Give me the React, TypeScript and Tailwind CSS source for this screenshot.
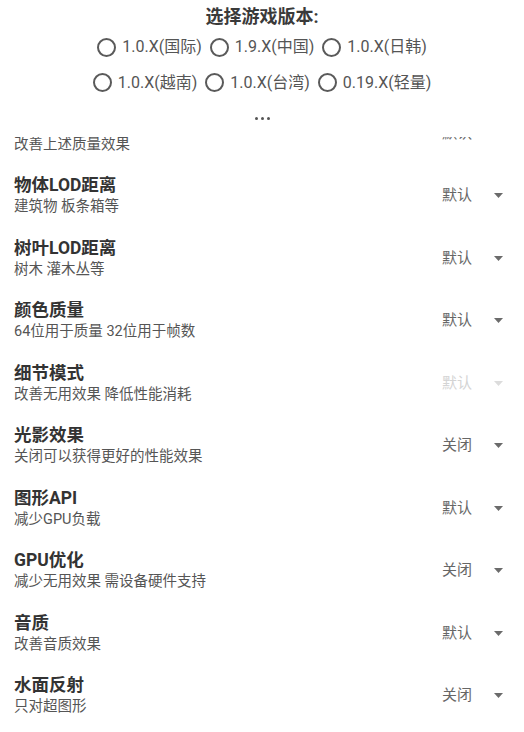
const versions = [
  ['1.0.X(国际)', '1.9.X(中国)', '1.0.X(日韩)'],
  ['1.0.X(越南)', '1.0.X(台湾)', '0.19.X(轻量)'],
];

type Setting = { title: string; desc: string; value: string; disabled?: boolean };

const settings: Setting[] = [
  { title: '画面质量', desc: '改善上述质量效果', value: '默认' },
  { title: '物体LOD距离', desc: '建筑物 板条箱等', value: '默认' },
  { title: '树叶LOD距离', desc: '树木 灌木丛等', value: '默认' },
  { title: '颜色质量', desc: '64位用于质量 32位用于帧数', value: '默认' },
  { title: '细节模式', desc: '改善无用效果 降低性能消耗', value: '默认', disabled: true },
  { title: '光影效果', desc: '关闭可以获得更好的性能效果', value: '关闭' },
  { title: '图形API', desc: '减少GPU负载', value: '默认' },
  { title: 'GPU优化', desc: '减少无用效果 需设备硬件支持', value: '关闭' },
  { title: '音质', desc: '改善音质效果', value: '默认' },
  { title: '水面反射', desc: '只对超图形', value: '关闭' },
];

const Caret = ({ light }: { light?: boolean }) => (
  <svg width="9" height="5" viewBox="0 0 9 5">
    <path d="M0 0 L9 0 L4.5 5 Z" fill={light ? '#dcdcdc' : '#6b6b6b'} />
  </svg>
);

export default function App() {
  return (
    <div className="h-[732px] w-[524px] bg-white flex flex-col overflow-hidden font-['Roboto','Noto_Sans_CJK_SC',sans-serif]">
      {/* Version picker */}
      <div className="shrink-0">
        <div className="h-[29.5px] pt-[5px] text-center text-[18px] leading-[24px] font-bold text-[#3a3a3a]">
          选择游戏版本:
        </div>
        {versions.map((row, i) => (
          <div key={i} className="h-[35.5px] flex items-center justify-center gap-[8px]">
            {row.map(v => (
              <div key={v} className="flex items-center gap-[6px]">
                <span className="w-[19px] h-[19px] rounded-full border-2 border-[#5a5a5a]" />
                <span className="text-[16px] text-[#555]">{v}</span>
              </div>
            ))}
          </div>
        ))}
        <div className="h-[36px] flex items-center justify-center gap-[3px]">
          <span className="w-[3px] h-[3px] rounded-full bg-[#555]" />
          <span className="w-[3px] h-[3px] rounded-full bg-[#555]" />
          <span className="w-[3px] h-[3px] rounded-full bg-[#555]" />
        </div>
      </div>

      {/* Settings list, scrolled */}
      <div className="flex-1 overflow-hidden">
        <div className="-mt-[34.75px]">
          {settings.map(s => (
            <div key={s.title} className="h-[62.5px] flex items-center pl-[14px] pr-[21px]">
              <div className="flex-1 self-start pt-[9px] flex flex-col">
                <span className="text-[17.5px] leading-[24px] font-bold text-[#333]">{s.title}</span>
                <span className="text-[14.5px] leading-[20px] text-[#555]">{s.desc}</span>
              </div>
              <span className={`text-[15px] mr-[22px] ${s.disabled ? 'text-[#d4d4d4]' : 'text-[#666]'}`}>
                {s.value}
              </span>
              <Caret light={s.disabled} />
            </div>
          ))}
        </div>
      </div>
    </div>
  );
}
